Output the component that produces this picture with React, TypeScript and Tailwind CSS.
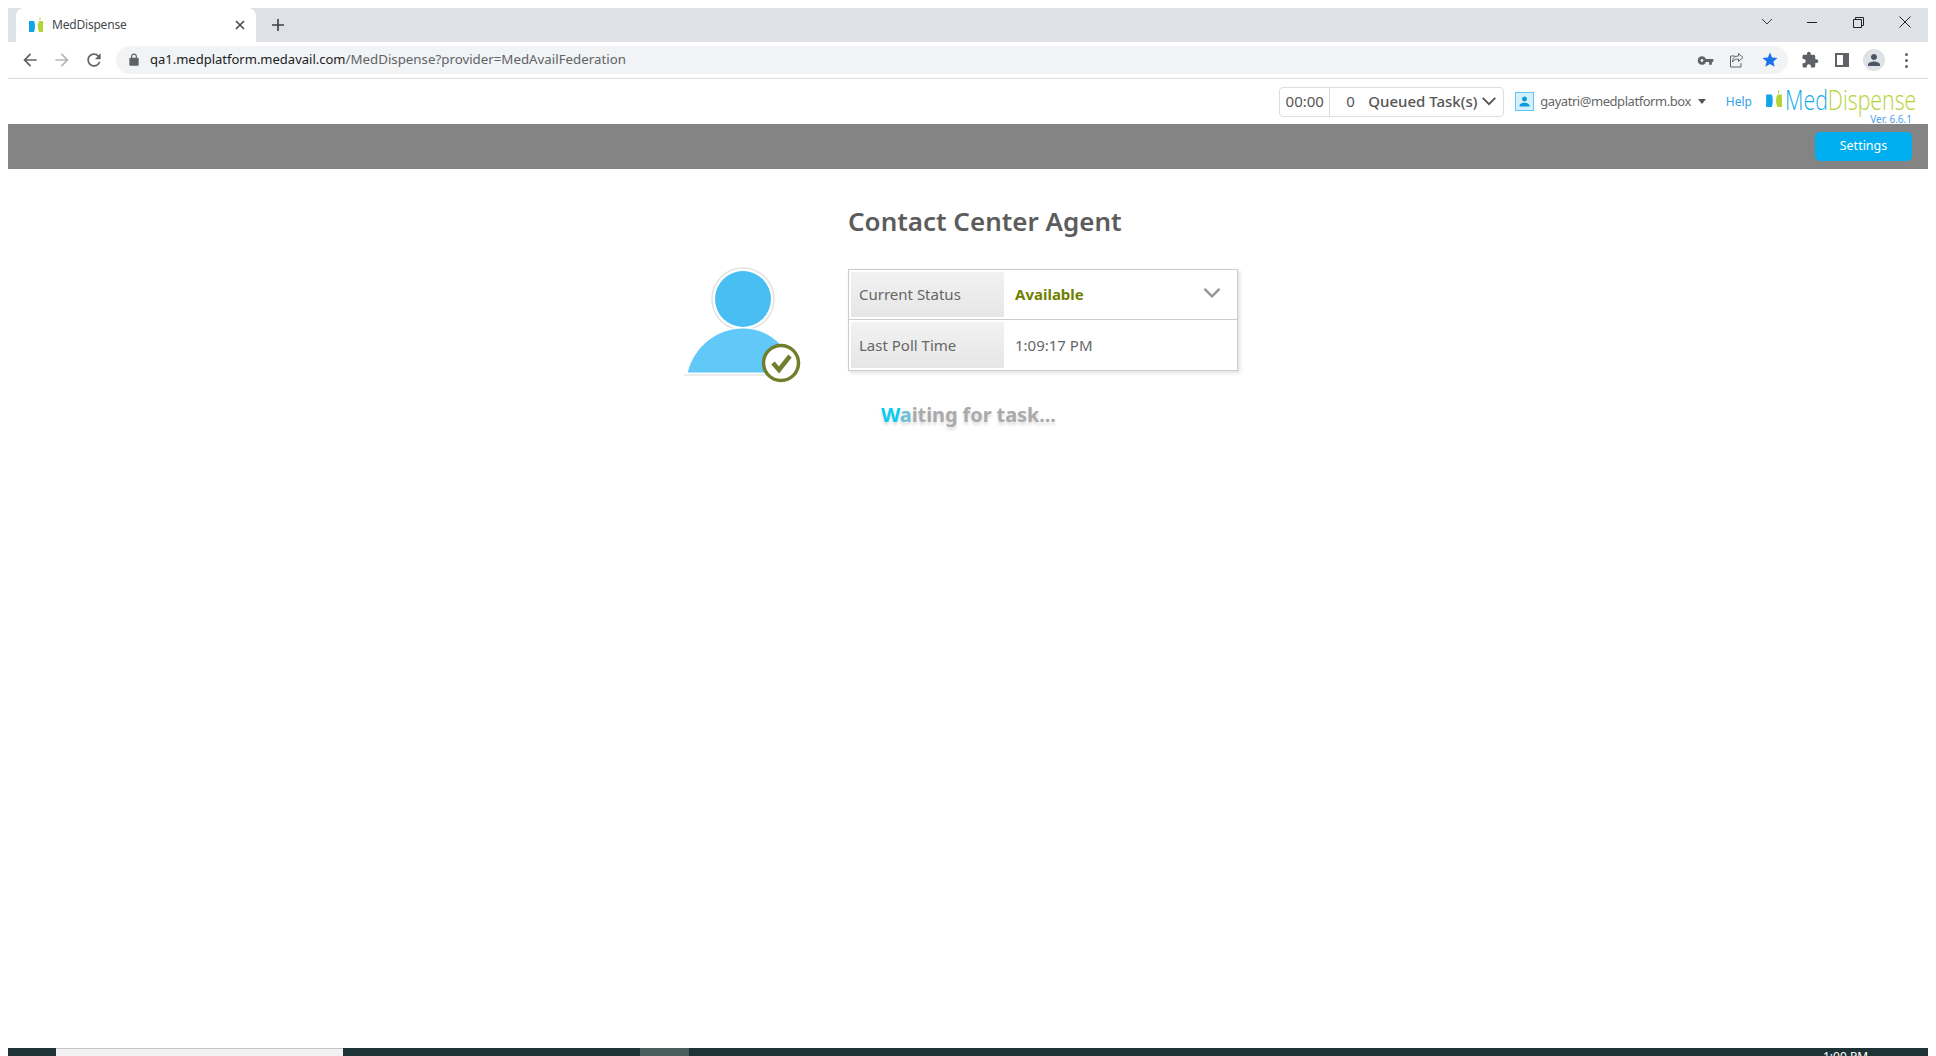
import React from "react";

const UI = "font-['Noto_Sans',sans-serif]";

function Mi({ d, size = 18, color = "#5f6368", className = "" }: { d: string; size?: number; color?: string; className?: string }) {
  return (
    <svg width={size} height={size} viewBox="0 0 24 24" className={className} fill={color}>
      <path d={d} />
    </svg>
  );
}

const P = {
  back: "M20 11H7.83l5.59-5.59L12 4 4 12l8 8 1.41-1.41L7.83 13H20v-2z",
  fwd: "M4 11h12.17l-5.59-5.59L12 4l8 8-8 8-1.41-1.41L16.17 13H4v-2z",
  reload: "M17.65 6.35C16.2 4.9 14.21 4 12 4c-4.42 0-7.99 3.58-7.99 8s3.57 8 7.99 8c3.73 0 6.84-2.55 7.73-6h-2.08c-.82 2.33-3.04 4-5.65 4-3.31 0-6-2.69-6-6s2.69-6 6-6c1.66 0 3.14.69 4.22 1.78L13 11h7V4l-2.35 2.35z",
  lock: "M18 8h-1V6c0-2.76-2.24-5-5-5S7 3.24 7 6v2H6c-1.1 0-2 .9-2 2v10c0 1.1.9 2 2 2h12c1.1 0 2-.9 2-2V10c0-1.1-.9-2-2-2zM9 6c0-1.66 1.34-3 3-3s3 1.34 3 3v2H9V6z",
  key: "M12.65 10C11.83 7.67 9.61 6 7 6c-3.31 0-6 2.69-6 6s2.69 6 6 6c2.61 0 4.83-1.67 5.65-4H17v4h4v-4h2v-4H12.65zM7 14c-1.1 0-2-.9-2-2s.9-2 2-2 2 .9 2 2-.9 2-2 2z",
  star: "M12 17.27L18.18 21l-1.64-7.03L22 9.24l-7.19-.61L12 2 9.19 8.63 2 9.24l5.46 4.73L5.82 21z",
  puzzle: "M20.5 11H19V7c0-1.1-.9-2-2-2h-4V3.5C13 2.12 11.88 1 10.5 1S8 2.12 8 3.5V5H4c-1.1 0-1.99.9-1.99 2v3.8H3.5c1.49 0 2.7 1.21 2.7 2.7s-1.21 2.7-2.7 2.7H2V20c0 1.1.9 2 2 2h3.8v-1.5c0-1.49 1.21-2.7 2.7-2.7 1.49 0 2.7 1.21 2.7 2.7V22H17c1.1 0 2-.9 2-2v-4h1.5c1.38 0 2.5-1.12 2.5-2.5S21.88 11 20.5 11z",
  person: "M12 12c2.21 0 4-1.79 4-4s-1.79-4-4-4-4 1.79-4 4 1.79 4 4 4zm0 2c-2.67 0-8 1.34-8 4v2h16v-2c0-2.66-5.33-4-8-4z",
};

function Favicon({ w = 16, h = 16 }: { w?: number; h?: number }) {
  return (
    <svg width={w} height={h} viewBox="0 0 16 16" className="shrink-0">
      <path d="M1 4 h5 q2 5 0 11 h-5 z" fill="#0ea5e9" />
      <path d="M15 4 h-4 q-2.500 5 0 11 h4 z" fill="#b5d334" />
      <rect x="11.5" y="0.5" width="1" height="2.5" fill="#b5d334" />
    </svg>
  );
}

function TabStrip() {
  return (
    <div className="flex h-[34px] shrink-0 items-stretch bg-[#dee1e6]">
      <div className="ml-2 flex w-[240px] items-center rounded-t-lg bg-white pl-3 pr-[11px]">
        <Favicon />
        <span className="ml-2 text-[12px] tracking-[-0.2px] text-[#45494d]">MedDispense</span>
        <svg width="10" height="10" viewBox="0 0 10 10" className="ml-auto" stroke="#45494d" strokeWidth="1.6">
          <path d="M1 1l8 8M9 1l-8 8" />
        </svg>
      </div>
      <div className="ml-[16px] flex items-center">
        <svg width="12" height="12" viewBox="0 0 12 12" stroke="#3c4043" strokeWidth="1.6">
          <path d="M6 0v12M0 6h12" />
        </svg>
      </div>
      <div className="ml-auto flex items-center">
        <svg width="12" height="8" viewBox="0 0 12 8" fill="none" stroke="#3c4043" className="mr-[34px] mb-[6px]">
          <path d="M1 1l5 5 5-5" />
        </svg>
        <div className="mr-[36px] mb-[6px] h-px w-[10px] bg-[#222]" />
        <svg width="11" height="11" viewBox="0 0 11 11" fill="none" stroke="#222" className="mr-[35px] mb-[6px]">
          <path d="M.5 2.5h8v8h-8zM2.5 2.5v-2h8v8h-2" />
        </svg>
        <svg width="12" height="12" viewBox="0 0 12 12" stroke="#222" className="mr-[17px] mb-[6px]">
          <path d="M.5.5l11 11M11.5.5l-11 11" />
        </svg>
      </div>
    </div>
  );
}

function Toolbar() {
  return (
    <div className="flex h-[37px] shrink-0 items-center border-b border-[#dadce0] bg-white">
      <Mi d={P.back} size={20} className="ml-3" />
      <Mi d={P.fwd} size={20} color="#b4b6b9" className="ml-3" />
      <Mi d={P.reload} size={20} className="ml-3" />
      <div className="ml-3 flex h-[28px] w-[1672px] items-center rounded-full bg-[#f1f3f4]">
        <Mi d={P.lock} size={14} className="ml-[11px]" />
        <span className="ml-[9px] text-[13px] text-[#202124]">
          qa1.medplatform.medavail.com<span className="text-[13.3px] text-[#5f6368]">/MedDispense?provider=MedAvailFederation</span>
        </span>
        <Mi d={P.key} size={17} className="ml-auto mr-[15px]" />
        <svg width="16" height="16" viewBox="0 0 16 16" fill="none" stroke="#5f6368" className="mr-[16px]">
          <path d="M14 5.5L9.5 1.5v2.5C5.5 4 3.5 6.5 3.5 10c1.5-2.5 3.500-3 6-3v2.500zM6 4H1.500v11H12v-4" />
        </svg>
        <Mi d={P.star} size={18} color="#1a73e8" className="mr-[9px]" />
      </div>
      <Mi d={P.puzzle} size={18} className="ml-[13px]" />
      <svg width="14" height="14" viewBox="0 0 14 14" className="ml-[16px]">
        <path d="M0 0h14v14H0z M2 2v10h6V2z" fillRule="evenodd" fill="#5f6368" />
      </svg>
      <div className="ml-[14px] flex h-[22px] w-[22px] items-center justify-center rounded-full bg-[#dfe1e5]">
        <Mi d={P.person} size={18} color="#4a5568" />
      </div>
      <div className="ml-[20px] flex flex-col gap-[3px]">
        <div className="h-[3px] w-[3px] rounded-full bg-[#5f6368]" />
        <div className="h-[3px] w-[3px] rounded-full bg-[#5f6368]" />
        <div className="h-[3px] w-[3px] rounded-full bg-[#5f6368]" />
      </div>
    </div>
  );
}

function Logo() {
  return (
    <div className="relative ml-[13px] flex h-[45px] w-[152px] items-center pb-[5px]">
      <Favicon w={18} h={20} />
      <div className="ml-[2px] flex origin-left scale-x-[0.79] text-[27px] leading-none font-light font-['Open_Sans',sans-serif]">
        <span className="text-[#15a9e6]">Med</span>
        <span className="text-[#b5d334]">Dispense</span>
      </div>
      <span className="absolute right-[5px] bottom-0 text-[10px] leading-none text-[#4f9fe8]">Ver. 6.6.1</span>
    </div>
  );
}

function AppBar() {
  return (
    <div className="flex h-[45px] shrink-0 items-center justify-end bg-white pr-[11px]">
      <div className="flex h-[30px] w-[225px] items-center rounded-[4px] border border-[#dddddd] text-[15px] text-[#555]">
        <span className="flex h-full w-[50px] items-center justify-center border-r border-[#dddddd]">00:00</span>
        <span className="ml-[16px] w-[22px]">0</span>
        <span className="font-medium">Queued Task(s)</span>
        <svg width="16" height="9" viewBox="0 0 16 10" fill="none" stroke="#555" strokeWidth="2" className="ml-auto mr-[6px]">
          <path d="M1 1l7 7 7-7" />
        </svg>
      </div>
      <div className="ml-[11px] flex h-[19px] w-[19px] items-center justify-center border border-[#5cc8f5] bg-[#d6f0fb]">
        <Mi d={P.person} size={15} color="#0a9ddb" />
      </div>
      <span className="ml-[6px] text-[13px] tracking-[-0.45px] text-[#666]">gayatri@medplatform.box</span>
      <svg width="8" height="5" viewBox="0 0 8 5" className="ml-[7px]"><path d="M0 0h8L4 5z" fill="#555" /></svg>
      <span className="ml-[20px] text-[12px] text-[#2f9fe8]">Help</span>
      <Logo />
    </div>
  );
}

function Agent() {
  return (
    <svg width="130" height="125" viewBox="0 0 130 125" className="shrink-0">
      <circle cx="63" cy="39" r="31" fill="#fff" stroke="#e2e2e2" strokeWidth="1.500" />
      <circle cx="63" cy="39" r="28" fill="#48bef2" />
      <path d="M7 113 C 14 85, 38 68, 63 68 C 88 68, 108 85, 116 113 Z" fill="#60c9f7" stroke="#fff" strokeWidth="1" />
      <path d="M4 115h108" stroke="#ececec" strokeWidth="2" />
      <circle cx="101" cy="103" r="17.500" fill="#fff" stroke="#6f7f2b" strokeWidth="3.500" />
      <path d="M93 103l6 7 11-14" fill="none" stroke="#6f7f2b" strokeWidth="4.500" />
    </svg>
  );
}

function StatusTable() {
  const label = "flex w-[157px] items-center border-[2px] border-white bg-gradient-to-b from-[#f2f2f2] to-[#e6e6e6] pl-[8px] text-[#666]";
  return (
    <div className="flex w-[390px] flex-col border border-[#cccccc] bg-white text-[15px] shadow-[2px_2px_4px_rgba(0,0,0,0.12)]">
      <div className="flex h-[50px] border-b border-[#cccccc]">
        <div className={label}>Current Status</div>
        <div className="flex flex-1 items-center pl-[9px] font-bold text-[#6f8000]">
          Available
          <svg width="18" height="10" viewBox="0 0 20 12" fill="none" stroke="#999" strokeWidth="3" className="ml-auto mr-[16px] mb-[3px]">
            <path d="M1 1l9 9 9-9" />
          </svg>
        </div>
      </div>
      <div className="flex h-[50px]">
        <div className={label}>Last Poll Time</div>
        <div className="flex flex-1 items-center pl-[9px] text-[#666]">1:09:17 PM</div>
      </div>
    </div>
  );
}

function Content() {
  return (
    <div className="flex flex-1 items-start pl-[672px]">
      <div className="mt-[91px] w-[168px]">
        <Agent />
      </div>
      <div className="flex flex-col">
        <h1 className="mt-[34px] text-[26px] leading-[36px] font-semibold text-[#5c5c5c]">Contact Center Agent</h1>
        <div className="mt-[30px]">
          <StatusTable />
        </div>
        <div className="mt-[30px] ml-[33px] text-[20px] leading-[28px] font-bold tracking-[-0.1px] text-[#aaaaaa] [text-shadow:0_3px_3px_#dddddd]">
          <span className="text-[#0ccbf0]">W</span>
          <span className="text-[#6fbfd8]">a</span>iting for task...
        </div>
      </div>
    </div>
  );
}

function Taskbar() {
  return (
    <div className="flex h-2 shrink-0 overflow-hidden bg-[#1d3335]">
      <div className="ml-[48px] h-full w-[287px] border-t border-[#c4c4c4] bg-[#f2f2f2]" />
      <div className="ml-[297px] h-full w-[49px] bg-[#4a5c5c]" />
      <span className="ml-[1134px] pt-[3px] text-[12px] leading-none text-white">1:09 PM</span>
    </div>
  );
}

export default function App() {
  return (
    <div className={`flex h-screen flex-col overflow-hidden bg-white px-2 pt-2 ${UI}`}>
      <TabStrip />
      <Toolbar />
      <AppBar />
      <div className="flex h-[45px] shrink-0 items-center justify-end bg-[#848484] pr-[16px]">
        <button className="h-[29px] w-[97px] rounded-[5px] bg-[#00aeef] text-[12.5px] text-white">Settings</button>
      </div>
      <Content />
      <Taskbar />
    </div>
  );
}
